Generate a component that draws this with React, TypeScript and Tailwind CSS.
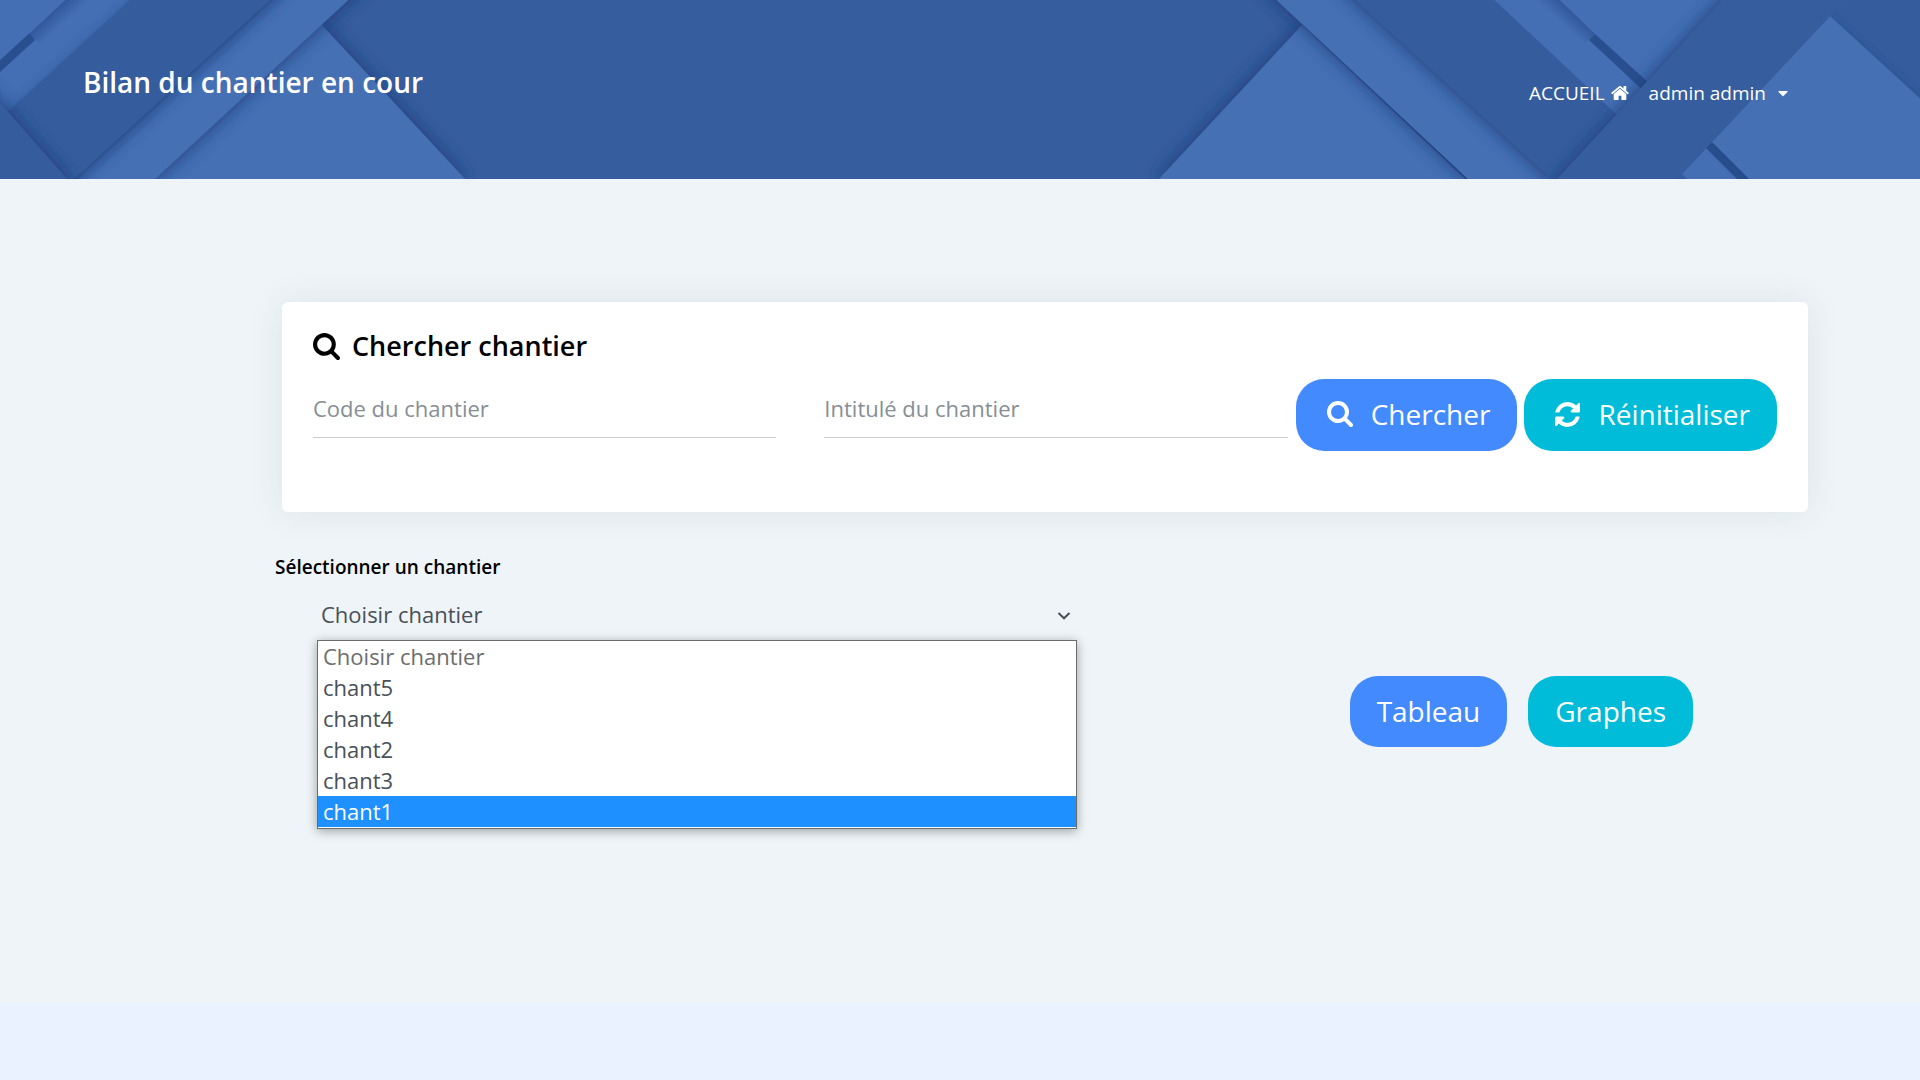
import { useState } from "react";
import { FaCaretDown } from "react-icons/fa";

const OPTIONS = ["chant5", "chant4", "chant2", "chant3", "chant1"];

const DARK = "#365d9e";
const LIGHT = "#446fb4";
const NOTCH = "#2a4f8e";

function HeaderPattern() {
  return (
    <svg
      className="absolute inset-0 h-full w-full"
      viewBox="0 0 1920 179"
      preserveAspectRatio="xMidYMid slice"
      aria-hidden="true"
    >
      <defs>
        <filter id="cast" filterUnits="userSpaceOnUse" x="-60" y="-60" width="2040" height="300">
          <feDropShadow dx="0" dy="0" stdDeviation="9" floodColor="#123472" floodOpacity="0.9" />
        </filter>
        <filter id="soft" filterUnits="userSpaceOnUse" x="-60" y="-60" width="2040" height="300">
          <feDropShadow dx="0" dy="0" stdDeviation="6" floodColor="#123472" floodOpacity="0.3" />
        </filter>
        <linearGradient id="gapLeft" gradientUnits="userSpaceOnUse" x1="65" y1="0" x2="76" y2="12">
          <stop offset="0" stopColor="#31579a" />
          <stop offset="1" stopColor={LIGHT} />
        </linearGradient>
        <linearGradient id="gapRight" gradientUnits="userSpaceOnUse" x1="1560" y1="0" x2="1549" y2="12">
          <stop offset="0" stopColor="#31579a" />
          <stop offset="1" stopColor={LIGHT} />
        </linearGradient>
      </defs>
      <rect width="1920" height="179" fill={DARK} />

      <polygon points="321,24 466,180 100,230" fill={LIGHT} filter="url(#cast)" />
      <polygon points="292,-20 370,-20 154,180 73,180" fill={LIGHT} filter="url(#cast)" />
      <polygon points="110,-20 292,-20 73,180 40,220 -30,150" fill={DARK} filter="url(#cast)" />
      <polygon points="70,-20 152,-20 8,112 -30,150 -30,60" fill={LIGHT} />
      <polygon points="152,-20 292,-20 73,180 40,220 8,112" fill={DARK} filter="url(#soft)" />
      <polygon points="-40,58 8,112 68,180 68,240 -40,240" fill={DARK} filter="url(#cast)" />
      <polygon points="65,0 90,0 40,45 30,33" fill="url(#gapLeft)" />
      <polygon points="30,33 35,40 0,72 -10,72 -10,60" fill={NOTCH} />
      <polygon points="-40,-20 87,-20 -40,97" fill={LIGHT} />

      <polygon points="1302,25 1158,180 1530,240" fill={LIGHT} filter="url(#cast)" />
      <polygon points="1255,-20 1333,-20 1552,180 1469,180" fill={LIGHT} filter="url(#cast)" />
      <polygon points="1333,-20 1473,-20 1650,145 1552,180" fill={DARK} filter="url(#cast)" />
      <polygon points="1473,-20 1540,-20 1660,90 1650,120 1616,114" fill={LIGHT} />
      <polygon points="1535,0 1560,0 1595,34 1584,45" fill="url(#gapRight)" />
      <polygon points="1595,34 1660,93 1650,97 1589,40" fill={NOTCH} />
      <polygon points="1538,-20 1742,-20 1647,81" fill={LIGHT} />
      <polygon points="1741,-20 1930,-20 1930,120 1830,190 1548,190" fill={DARK} filter="url(#cast)" />
      <polygon points="1706,148 1740,180 1688,180 1682,174" fill={LIGHT} />
      <polygon points="1712,142 1752,180 1738,180 1706,148" fill={NOTCH} />
      <polygon points="1830,16 1960,135 1960,230 1800,230 1712,142" fill={LIGHT} filter="url(#soft)" />
      <polygon points="1722,0 1845,0 1712,142 1682,174 1672,180 1556,180" fill={DARK} />
    </svg>
  );
}

function SearchIcon({ className }: { className: string }) {
  return (
    <svg className={className} viewBox="0 0 1664 1664" fill="currentColor" aria-hidden="true">
      <path d="M1152 704q0-185-131.500-316.500t-316.500-131.500-316.500 131.500-131.500 316.500 131.500 316.500 316.500 131.500 316.500-131.500 131.500-316.500zm512 832q0 52-38 90t-90 38q-54 0-90-38l-343-342q-179 124-399 124-143 0-273.500-55.500t-225-150-150-225-55.500-273.500 55.500-273.500 150-225 225-150 273.500-55.500 273.500 55.500 225 150 150 225 55.500 273.500q0 220-124 399l343 343q37 37 37 90z" />
    </svg>
  );
}

function RefreshIcon({ className }: { className: string }) {
  return (
    <svg className={className} viewBox="0 0 1536 1536" fill="currentColor" aria-hidden="true">
      <path d="M1511 928q0 5-1 7-64 268-268 434.500t-478 166.500q-146 0-282.500-55t-243.500-157l-129 129q-19 19-45 19t-45-19-19-45v-448q0-26 19-45t45-19h448q26 0 45 19t19 45-19 45l-137 137q71 66 161 102t187 36q134 0 250-65t186-179q11-17 53-117 8-23 30-23h192q13 0 22.500 9.500t9.500 22.500zm25-800v448q0 26-19 45t-45 19h-448q-26 0-45-19t-19-45 19-45l138-138q-148-137-349-137-134 0-250 65t-186 179q-11 17-53 117-8 23-30 23h-199q-13 0-22.500-9.500t-9.500-22.500v-7q65-268 270-434.500t480-166.500q146 0 284 55.500t245 156.500l130-129q19-19 45-19t45 19 19 45z" />
    </svg>
  );
}

function HomeIcon({ className }: { className: string }) {
  return (
    <svg className={className} viewBox="0 0 1612 1283" fill="currentColor" aria-hidden="true">
      <path d="M1382 739v480q0 26-19 45t-45 19h-384v-384h-256v384h-384q-26 0-45-19t-19-45v-480q0-1 .5-3t.5-3l575-474 575 474q1 2 1 6zm223-69l-62 74q-8 9-21 11h-3q-13 0-21-7l-692-577-692 577q-12 8-24 7-13-2-21-11l-62-74q-8-10-7-23.500t11-21.500l719-599q32-26 76-26t76 26l244 204v-195q0-14 9-23t23-9h192q14 0 23 9t9 23v408l219 182q10 8 11 21.500t-7 23.500z" />
    </svg>
  );
}

export default function App() {
  const [chosen, setChosen] = useState("");

  return (
    <div className="flex min-h-screen flex-col bg-[#ebf2ff] font-['Open_Sans',sans-serif]">
      <header className="relative h-[179px] overflow-hidden bg-[#365d9e] text-white">
        <HeaderPattern />
        <div className="relative flex items-start justify-between pr-[131px] pl-[83px]">
          <h1 className="pt-[62px] text-[28px] leading-10 font-semibold">Bilan du chantier en cour</h1>
          <nav className="flex items-center gap-5 pt-[79px] text-[19px] leading-7">
            <a href="#accueil" className="flex items-center gap-1.5">
              ACCUEIL
              <HomeIcon className="h-[14px] w-[18px]" />
            </a>
            <button type="button" className="flex items-center gap-[11px]">
              admin admin
              <FaCaretDown className="h-4 w-3" aria-hidden="true" />
            </button>
          </nav>
        </div>
      </header>

      <main className="bg-[#eef4f7] pt-[123px] pr-28 pb-[256px] pl-[275px]">
        <section className="ml-[7px] rounded-md bg-white px-[31px] pt-6 pb-[61px] shadow-[0_0_36px_rgba(69,90,100,0.09)]">
          <h2 className="flex items-center gap-3 text-[27px] leading-10 font-semibold text-black">
            <SearchIcon className="size-[27px]" />
            Chercher chantier
          </h2>
          <form className="mt-[13px] flex items-start" onSubmit={(e) => e.preventDefault()}>
            <div className="grid flex-1 grid-cols-2 gap-12">
              <input
                type="text"
                aria-label="Code du chantier"
                placeholder="Code du chantier"
                className="h-[59px] w-full min-w-0 border-b border-[#cccccc] bg-transparent text-[22px] text-[#495057] outline-none placeholder:text-[#868e96]"
              />
              <input
                type="text"
                aria-label="Intitulé du chantier"
                placeholder="Intitulé du chantier"
                className="h-[59px] w-full min-w-0 border-b border-[#cccccc] bg-transparent text-[22px] text-[#495057] outline-none placeholder:text-[#868e96]"
              />
            </div>
            <button
              type="submit"
              className="ml-2 flex h-[72px] items-center gap-[18px] rounded-[28px] bg-[#448aff] pr-[27px] pb-0.5 pl-[31px] text-[28px] text-white"
            >
              <SearchIcon className="size-[26px]" />
              Chercher
            </button>
            <button
              type="reset"
              className="ml-[7px] flex h-[72px] items-center gap-[18px] rounded-[28px] bg-[#00bcd9] pr-[27px] pb-0.5 pl-[31px] text-[28px] text-white"
            >
              <RefreshIcon className="size-[25px]" />
              Réinitialiser
            </button>
          </form>
        </section>

        <section className="mt-10 flex items-start justify-between">
          <div className="w-[803px]">
            <label htmlFor="chantier" className="block text-[19px] leading-[30px] font-semibold text-black">
              Sélectionner un chantier
            </label>
            <div className="relative mt-[7px] ml-[41px]">
              <select
                id="chantier"
                value={chosen}
                onChange={(e) => setChosen(e.target.value)}
                className="h-[51px] w-full appearance-none bg-transparent pl-[5px] text-[22px] text-[#495057] outline-none"
              >
                <option value="">Choisir chantier</option>
                {OPTIONS.map((name) => (
                  <option key={name} value={name}>
                    {name}
                  </option>
                ))}
              </select>
              <svg
                className="pointer-events-none absolute top-[23px] right-[7px] h-2 w-3.5"
                viewBox="0 0 14 8"
                fill="none"
                stroke="#495057"
                strokeWidth="2"
                aria-hidden="true"
              >
                <path d="M1.500 1 L7 6.300 L12.500 1" />
              </svg>
              <ul
                role="listbox"
                aria-label="Chantiers"
                className="absolute top-full right-px left-px border border-[#6b6b6b] bg-white pb-px text-[22px] leading-[31px] text-[#495057] shadow-[0_2px_10px_rgba(0,0,0,0.35)]"
              >
                <li role="option" aria-selected="false" aria-disabled="true" className="px-[5px] text-[#6d6d6d]">
                  Choisir chantier
                </li>
                {OPTIONS.map((name) => (
                  <li
                    key={name}
                    role="option"
                    aria-selected={name === "chant1"}
                    onClick={() => setChosen(name)}
                    className="px-[5px] aria-selected:bg-[#1e90ff] aria-selected:text-white"
                  >
                    {name}
                  </li>
                ))}
              </ul>
            </div>
          </div>
          <div className="mt-[124px] mr-[115px] flex gap-[21px]">
            <button type="button" className="h-[71px] rounded-[28px] bg-[#448aff] px-[27px] pb-0.5 text-[28px] text-white">
              Tableau
            </button>
            <button type="button" className="h-[71px] rounded-[28px] bg-[#00bcd9] px-[27px] pb-0.5 text-[28px] text-white">
              Graphes
            </button>
          </div>
        </section>
      </main>
    </div>
  );
}
